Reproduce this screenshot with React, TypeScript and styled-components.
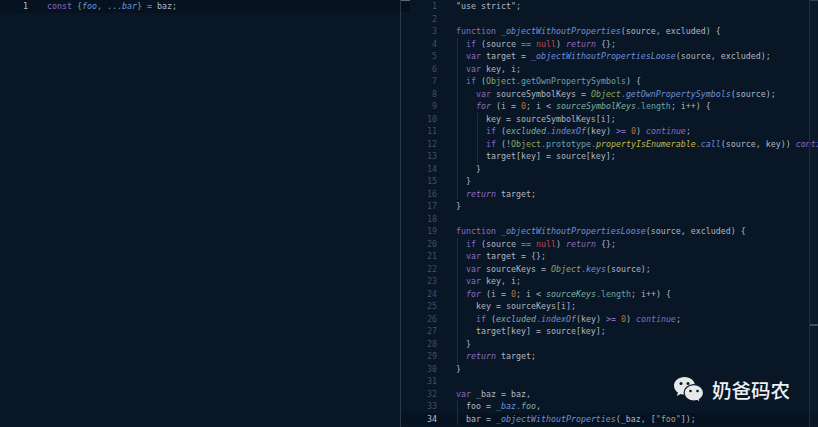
import React from "react";
import styled, { createGlobalStyle } from "styled-components";

const Global = createGlobalStyle`
  html, body { margin: 0; padding: 0; background: #081626; }
  body { width: 818px; height: 427px; overflow: hidden; }
`;

const Page = styled.div`
  position: relative;
  display: flex;
  width: 818px;
  height: 427px;
  overflow: hidden;
  background: #081626;
  font-family: "DejaVu Sans Mono", monospace;
  font-size: 8.3px;
  color: #b0b7c1;
`;

const Pane = styled.section<{ $width: number; $divider?: boolean }>`
  position: relative;
  width: ${(p) => p.$width}px;
  flex: none;
  overflow: hidden;
  border-right: ${(p) => (p.$divider ? "1px solid #2a3a4b" : "none")};
  box-sizing: border-box;
`;

const Row = styled.div<{ $active?: boolean; $gutter: number }>`
  display: grid;
  grid-template-columns: ${(p) => p.$gutter}px 1fr;
  column-gap: 19px;
  height: 12.5px;
  line-height: 12.5px;
  white-space: pre;
  background: ${(p) => (p.$active ? "#06121f" : "transparent")};
`;

const Num = styled.span<{ $active?: boolean }>`
  text-align: right;
  color: ${(p) => (p.$active ? "#b8bfc9" : "#434f62")};
`;

const Code = styled.span`
  position: relative;
  overflow: visible;
`;

const Guide = styled.i<{ $at: number }>`
  position: absolute;
  top: 0;
  bottom: 0;
  left: ${(p) => p.$at}px;
  width: 1px;
  background: #1f2d3e;
`;

const K = styled.span`color: #8a6cc0;`;
const Kc = styled.em`color: #8a6cc0;`;
const F = styled.em`color: #6f8fd8;`;
const G = styled.span`color: #8fa85f;`;
const Gi = styled.em`color: #8fa85f;`;
const T = styled.em`color: #7fb0a4;`;
const C = styled.span`color: #6ba3a8;`;
const N = styled.span`color: #c0494f;`;
const O = styled.span`color: #b9703f;`;
const Y = styled.em`color: #c3b84e;`;
const S = styled.span`color: #b79c5b;`;
const Op = styled.span`color: #9a7ad0;`;
const P = styled.span`color: #7d8794;`;
const Bl = styled.em`color: #6a94d8;`;

const Ruler = styled.div`
  position: absolute;
  top: 0;
  bottom: 0;
  right: 0;
  width: 8px;
  border-left: 1px solid #1f2d3e;
  background: rgba(120, 140, 165, 0.03);
`;

const RulerMark = styled.div`
  position: absolute;
  right: 0;
  top: 324px;
  width: 8px;
  height: 2px;
  background: #3a4d63;
`;

const RulerCap = styled.div`
  position: absolute;
  right: 0;
  top: 0;
  width: 8px;
  height: 1px;
  background: #2c3b4d;
`;

const Thumb = styled.div`
  position: absolute;
  left: 0;
  top: 0;
  width: 9px;
  height: 12px;
  background: #06111d;
`;

const ThumbCap = styled.div`
  position: absolute;
  left: 0;
  top: 0;
  width: 9px;
  height: 1px;
  background: #5a6877;
`;

const Mark = styled.div`
  position: absolute;
  left: 674px;
  top: 377px;
  display: flex;
  align-items: center;
  gap: 8px;
  height: 26px;
`;

const Brand = styled.span`
  font-family: "Noto Sans CJK SC", sans-serif;
  font-size: 19.5px;
  font-weight: 500;
  line-height: 26px;
  color: #eef0f1;
`;

const lines: [React.ReactNode, number[]?][] = [
  [<>"use strict";</>],
  [""],
  [<><K>function</K> <F>_objectWithoutProperties</F>(source, excluded) {"{"}</>],
  [<>  <K>if</K> (source <Op>==</Op> <N>null</N>) <Kc>return</Kc> {"{}"};</>, [1]],
  [<>  <K>var</K> target = <F>_objectWithoutPropertiesLoose</F>(source, excluded);</>, [1]],
  [<>  <K>var</K> key, i;</>, [1]],
  [<>  <K>if</K> (<G>Object</G><P>.</P><C>getOwnPropertySymbols</C>) {"{"}</>, [1]],
  [<>    <K>var</K> sourceSymbolKeys = <Gi>Object</Gi><P>.</P><F>getOwnPropertySymbols</F>(source);</>, [1]],
  [<>    <Kc>for</Kc> (i = <O>0</O>; i {"<"} <T>sourceSymbolKeys</T><P>.</P><C>length</C>; i++) {"{"}</>, [1]],
  [<>      key = sourceSymbolKeys[i];</>, [1, 21]],
  [<>      <K>if</K> (<T>excluded</T><P>.</P><F>indexOf</F>(key) <Op>{">="}</Op> <O>0</O>) <Kc>continue</Kc>;</>, [1, 21]],
  [<>      <K>if</K> (!<G>Object</G><P>.</P><C>prototype</C><P>.</P><Y>propertyIsEnumerable</Y><P>.</P><F>call</F>(source, key)) <Kc>continue</Kc>;</>, [1, 21]],
  [<>      target[key] = source[key];</>, [1, 21]],
  [<>    {"}"}</>, [1]],
  [<>  {"}"}</>, [1]],
  [<>  <Kc>return</Kc> target;</>, [1]],
  [<>{"}"}</>],
  [""],
  [<><K>function</K> <F>_objectWithoutPropertiesLoose</F>(source, excluded) {"{"}</>],
  [<>  <K>if</K> (source <Op>==</Op> <N>null</N>) <Kc>return</Kc> {"{}"};</>, [1]],
  [<>  <K>var</K> target = {"{}"};</>, [1]],
  [<>  <K>var</K> sourceKeys = <Gi>Object</Gi><P>.</P><F>keys</F>(source);</>, [1]],
  [<>  <K>var</K> key, i;</>, [1]],
  [<>  <Kc>for</Kc> (i = <O>0</O>; i {"<"} <T>sourceKeys</T><P>.</P><C>length</C>; i++) {"{"}</>, [1]],
  [<>    key = sourceKeys[i];</>, [1]],
  [<>    <K>if</K> (<T>excluded</T><P>.</P><F>indexOf</F>(key) <Op>{">="}</Op> <O>0</O>) <Kc>continue</Kc>;</>, [1]],
  [<>    target[key] = source[key];</>, [1]],
  [<>  {"}"}</>, [1]],
  [<>  <Kc>return</Kc> target;</>, [1]],
  [<>{"}"}</>],
  [""],
  [<><K>var</K> _baz = baz,</>],
  [<>  foo = <F>_baz</F><P>.</P><T>foo</T>,</>, [1]],
  [<>  bar = <F>_objectWithoutProperties</F>(_baz, [<S>"foo"</S>]);</>, [1]],
];

export default function App() {
  return (
    <Page>
      <Global />
      <Pane $width={401} $divider>
        <Row $active $gutter={28}>
          <Num $active>1</Num>
          <Code>
            <K>const</K> <C>{"{"}</C><Bl>foo</Bl><C>, ...</C><Bl>bar</Bl><C>{"}"}</C> <Op>=</Op> baz;
          </Code>
        </Row>
      </Pane>
      <Pane $width={417}>
        <Thumb />
        <ThumbCap />
        {lines.map(([code, guides], i) => (
          <Row key={i} $gutter={36} $active={i === 33}>
            <Num $active={i === 33}>{i + 1}</Num>
            <Code>
              {(guides ?? []).map((at) => (
                <Guide key={at} $at={at} />
              ))}
              {code}
            </Code>
          </Row>
        ))}
        <Ruler />
        <RulerCap />
        <RulerMark />
      </Pane>
      <Mark>
        <svg width="30" height="26" viewBox="0 0 30 26" aria-hidden="true">
          <path d="M10.500 0C4.700 0 0 3.900 0 8.800c0 2.800 1.500 5.200 3.900 6.800L2.900 19l3.700-2c1.200.3 2.500.6 3.900.6 5.800 0 10.500-3.900 10.500-8.800S16.300 0 10.500 0z" fill="#e6e8ea" />
          <circle cx="7" cy="6.500" r="1.500" fill="#081626" />
          <circle cx="14" cy="6.500" r="1.500" fill="#081626" />
          <path d="M20 7.600c-5.500 0-9.900 3.700-9.900 8.200s4.400 8.200 9.900 8.200c1.100 0 2.200-.2 3.200-.4l3 1.900-.7-3.100c2.500-1.500 4-3.900 4-6.600 0-4.500-4-8.200-9.500-8.200z" fill="#e6e8ea" stroke="#081626" strokeWidth="1.200" />
          <circle cx="16.500" cy="14" r="1.300" fill="#081626" />
          <circle cx="23.500" cy="14" r="1.300" fill="#081626" />
        </svg>
        <Brand>奶爸码农</Brand>
      </Mark>
    </Page>
  );
}
